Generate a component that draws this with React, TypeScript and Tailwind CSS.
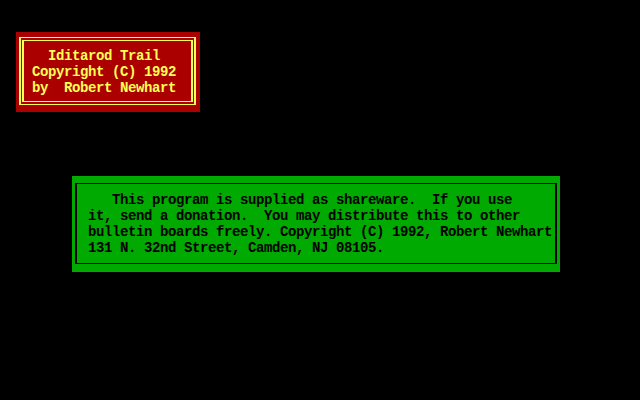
const titleLines = ["  Iditarod Trail", "Copyright (C) 1992", "by  Robert Newhart"];

const noticeLines = [
  "   This program is supplied as shareware.  If you use",
  "it, send a donation.  You may distribute this to other",
  "bulletin boards freely. Copyright (C) 1992, Robert Newhart",
  "131 N. 32nd Street, Camden, NJ 08105.",
];

const dosText =
  "font-['Liberation_Mono',monospace] font-bold text-[14px] leading-[16px] tracking-[-0.4px] whitespace-pre";

export default function App() {
  return (
    <div className="w-[640px] h-[400px] bg-black overflow-hidden flex flex-col">
      {/* title box */}
      <div className="ml-4 mt-8 w-[184px] h-[80px] bg-[#aa0000] flex flex-col">
        <div className="ml-[3px] mt-[5px] w-[177px] h-[68px] border-x-2 border-y border-[#ffff55] flex flex-col">
          <div className="ml-[1px] mt-[2px] w-[171px] h-[62px] border-x-2 border-y border-[#ffff55] pl-[8px] pt-[7px]">
            {titleLines.map((line) => (
              <div key={line} className={`${dosText} text-[#ffff55]`}>
                {line}
              </div>
            ))}
          </div>
        </div>
      </div>

      {/* shareware notice */}
      <div className="ml-[72px] mt-16 w-[488px] h-[96px] bg-[#00aa00] flex flex-col">
        <div className="ml-[3px] mt-[7px] w-[482px] h-[81px] border-x-2 border-y border-black pl-[11px] pt-[8px]">
          {noticeLines.map((line) => (
            <div key={line} className={`${dosText} text-black`}>
              {line}
            </div>
          ))}
        </div>
      </div>
    </div>
  );
}
